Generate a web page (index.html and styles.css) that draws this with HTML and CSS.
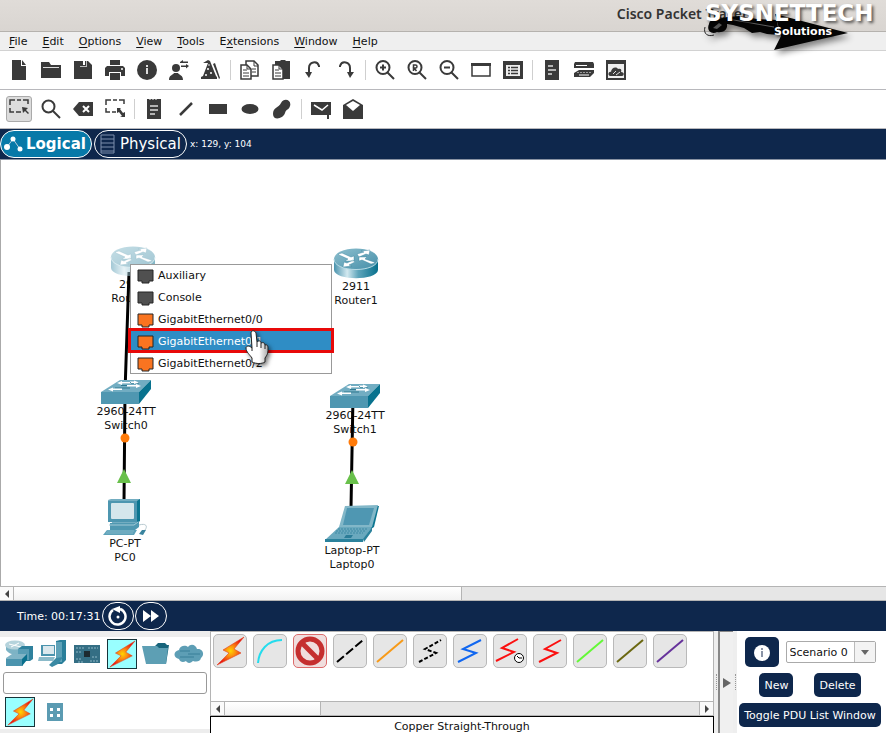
FILE: index.html
```html
<!DOCTYPE html>
<html lang="en">
<head>
<meta charset="utf-8">
<meta name="viewport" content="width=device-width, initial-scale=1">
<title>Cisco Packet Tracer</title>
<link rel="stylesheet" href="styles.css">
</head>
<body>
<svg class="sprite" width="0" height="0" aria-hidden="true">
  <defs>
    <linearGradient id="gBody" x1="0" x2="1"><stop offset="0" stop-color="#4a93ad"/><stop offset=".3" stop-color="#d3e9f0"/><stop offset=".55" stop-color="#5fa5bb"/><stop offset="1" stop-color="#07708d"/></linearGradient>
    <linearGradient id="gTop" x1="0" x2="1" y2="1"><stop offset="0" stop-color="#8dbfce"/><stop offset="1" stop-color="#468fa9"/></linearGradient>
    <radialGradient id="gBolt"><stop offset="0" stop-color="#ffd600"/><stop offset=".4" stop-color="#fb8a10"/><stop offset="1" stop-color="#e81111"/></radialGradient>
    <linearGradient id="gHand" x1="0" x2="1"><stop offset="0" stop-color="#fff"/><stop offset=".6" stop-color="#fff"/><stop offset="1" stop-color="#aaa"/></linearGradient>
  </defs>
  <symbol id="router" viewBox="0 0 46 31">
    <path d="M1 11v11c1 11 43 11 44 0V11z" fill="url(#gBody)"/>
    <ellipse cx="23" cy="11" rx="22" ry="10.5" fill="url(#gTop)"/>
    <path d="M1 11c0 14 44 14 44 0" fill="none" stroke="#b9dbe5"/>
    <path d="M5 6l4-1 9 4 3-1v5h-9l3-2-9-4zM42 15l-4 1-9-4-3 1V9h8l-2 2 9 3zM26 9l-2-3 7-2-3-1 9-1-1 5-3-1zM20 12l2 2-6 3 3 1-9 1 1-5 3 1z" fill="#fff" stroke="#317f9b" stroke-width=".4"/>
  </symbol>
  <symbol id="switch" viewBox="0 0 50 24">
    <path d="M0 12L19 0h31L38 12z" fill="#72adc2"/>
    <path d="M0 12h38v12H0z" fill="#4f97b1"/>
    <path d="M38 12L50 0v9L38 24z" fill="#08728e"/>
    <path d="M22 3h16M14 8h15M20 5.500h14" stroke="#31798f" fill="none"/>
    <path d="M16 3l5-2v1h9v1.500h-9V5zM40 6l-5-2v1h-9v1.500h9V8zM7 9.500l5-2v1h9V10h-9v1.500zM38 2.500l-5-2v1h-4V3h4v1z" fill="#fff"/>
  </symbol>
  <symbol id="bolt" viewBox="0 0 30 30"><path d="M29 1L8 14l6 3L2 29l24-12-7-4z" fill="url(#gBolt)" stroke="#e2401c" stroke-width=".6"/></symbol>
</svg>

<header class="titlebar">
  <h1>Cisco Packet Tracer</h1>
  <div class="brand">
    <svg width="150" height="50" viewBox="0 0 150 50" aria-hidden="true">
      <path d="M1 25c-2 7 3 10 9 8" fill="none" stroke="#222"/>
      <path d="M5 22c-3 7 3 11 8 8 6 1 11-2 10-8l6 1 11 3 8 5 8-1 7 2 12 1-2-15-20-1-18-3-12 1-8 2c-6-1-9 1-10 5z" fill="#050505"/>
      <path d="M71 12l73 19-74 17 7-14z" fill="#050505"/>
      <path d="M24 17l46 8" stroke="#777" stroke-width=".8"/>
      <path d="M9 26l6-5 3 2-5 4z" fill="#555"/>
    </svg>
    <strong>SYSNETTECH</strong>
    <em>Solutions</em>
  </div>
</header>

<nav class="menubar" aria-label="Main menu">
  <button><u>F</u>ile</button><button><u>E</u>dit</button><button><u>O</u>ptions</button><button><u>V</u>iew</button><button><u>T</u>ools</button><button>E<u>x</u>tensions</button><button><u>W</u>indow</button><button><u>H</u>elp</button>
</nav>

<div class="toolbar" role="toolbar" aria-label="Main tools">
  <button aria-label="New file"><svg viewBox="0 0 20 20"><path d="M3 0h9v6h5v14H3zM13 0l4 5h-4z"/></svg></button>
  <button aria-label="Open"><svg viewBox="0 0 20 20"><path d="M0 2h8l2 3h10v13H0z"/><path d="M2 7.500h16" stroke="#ddd"/></svg></button>
  <button aria-label="Save"><svg viewBox="0 0 20 20"><path d="M1 1h14l4 4v14H1z"/><path d="M6 1h1v6h7V1h-1v5H7V1z" fill="#bbb"/><path d="M10 1h2v4h-2z" fill="#fff"/></svg></button>
  <button aria-label="Print"><svg viewBox="0 0 20 20"><path d="M5 0h10v5H5zM2 6h16l2 2v8h-4v-4H4v4H0V8zM5 13h10v7H5z"/><circle cx="17" cy="9" r="1" fill="#fff"/></svg></button>
  <button aria-label="Information"><svg viewBox="0 0 20 20"><circle cx="10" cy="10" r="10"/><path d="M9 5h2v2H9zM9 8h2v6H9z" fill="#ddd"/></svg></button>
  <button aria-label="User profile"><svg viewBox="0 0 20 20"><circle cx="7" cy="8" r="4"/><path d="M0 20c0-5 4-5 5-7h4c1 2 5 2 5 7zM11 3V2l3-2v1.500h5V3zM20 6l-3-2v1.500h-5V7h5v1.500zM12 6h3"/></svg></button>
  <button aria-label="Activity wizard"><svg viewBox="0 0 20 20"><path d="M2 3l5-3 2 1 6 15 1 1v2H0v-2l2-1L7 3zM12 4l2-1 5 15-1 1z"/><g fill="#fff"><circle cx="7" cy="9" r="1"/><circle cx="10" cy="13" r="1"/><circle cx="5" cy="15" r="1"/><circle cx="8" cy="5" r=".8"/></g></svg></button>
  <span class="sep"></span>
  <button aria-label="Copy"><svg viewBox="0 0 20 20"><path d="M6 1h8l4 4v11H6z" fill="#fff" stroke="#3a3a3a" stroke-width="1.500"/><path d="M14 1v5h4M12 9h4M12 12h4" fill="none" stroke="#3a3a3a"/><path d="M1 5h6l4 4v10H1z" fill="#fff" stroke="#3a3a3a" stroke-width="1.500"/><path d="M7 5v4h4M3 10h4M3 13h6M3 16h6" fill="none" stroke="#3a3a3a"/></svg></button>
  <button aria-label="Paste"><svg viewBox="0 0 20 20"><path d="M3 1h5l1-1h4l1 1h4v18H3z"/><path d="M1 5h6l4 4v10H1z" fill="#fff" stroke="#3a3a3a" stroke-width="1.500"/><path d="M7 5v4h4M3 10h4M3 13h6M3 16h6" fill="none" stroke="#3a3a3a"/></svg></button>
  <button aria-label="Undo"><svg viewBox="0 0 20 20"><path d="M5 14V8c0-6 8-8 10-2v1" fill="none" stroke="#3a3a3a" stroke-width="2"/><path d="M1 12h7l-3 6z"/></svg></button>
  <button aria-label="Redo"><svg viewBox="0 0 20 20"><path d="M14 14V8c0-6-8-8-10-2v1" fill="none" stroke="#3a3a3a" stroke-width="2"/><path d="M11 12h7l-4 6z"/></svg></button>
  <span class="sep"></span>
  <button aria-label="Zoom in"><svg viewBox="0 0 20 20"><circle cx="8" cy="7.500" r="6.500" fill="none" stroke="#3a3a3a" stroke-width="2"/><path d="M12 12l7 7M5 7.500h6M8 4.500v6" stroke="#3a3a3a" stroke-width="2"/></svg></button>
  <button aria-label="Zoom reset"><svg viewBox="0 0 20 20"><circle cx="8" cy="7.500" r="6.500" fill="none" stroke="#3a3a3a" stroke-width="2"/><path d="M12 12l7 7" stroke="#3a3a3a" stroke-width="2"/><path d="M6.500 11V5h2a1.300 1.300 0 0 1 0 3H7l2.500 3" fill="none" stroke="#3a3a3a" stroke-width="1.500"/></svg></button>
  <button aria-label="Zoom out"><svg viewBox="0 0 20 20"><circle cx="8" cy="7.500" r="6.500" fill="none" stroke="#3a3a3a" stroke-width="2"/><path d="M12 12l7 7M5 7.500h6" stroke="#3a3a3a" stroke-width="2"/></svg></button>
  <button aria-label="Drawing palette"><svg viewBox="0 0 20 20"><rect x="1" y="4" width="18" height="12" fill="#fff" stroke="#3a3a3a" stroke-width="1.500"/><path d="M0 3h20v3H0z"/></svg></button>
  <button aria-label="Device dialog"><svg viewBox="0 0 20 20"><path d="M0 1h20v18H0z"/><path d="M3 5h14v11H3z" fill="#eee"/><path d="M5 7.500h2M5 10.500h2M5 13.500h2M8 7.500h7M8 10.500h7M8 13.500h7" stroke="#3a3a3a" stroke-width="1.500"/></svg></button>
  <span class="sep"></span>
  <button aria-label="Notes"><svg viewBox="0 0 20 20"><path d="M3 0h14v20H3z"/><path d="M6 6h5M6 10h8M6 14h4" stroke="#ddd" stroke-width="1.500"/></svg></button>
  <button aria-label="Custom devices"><svg viewBox="0 0 20 20"><path d="M1 2h18l1 2v4H0V4zM5 10h15v3l-4 4H0v-4z"/><path d="M2 5.500h11M1 9h18M5 15h10" stroke="#fff"/><path d="M3 12.500h14" stroke="#999" stroke-dasharray="2 1"/></svg></button>
  <button aria-label="Cloud"><svg viewBox="0 0 20 20"><path d="M0 0h20v20H0z"/><path d="M2 4h16v14H2z" fill="#eee"/><path d="M4 16c-3-1-1-5 1-4 0-4 5-6 7-3 3-1 4 1 3 3 4 0 3 4 1 4z"/><path d="M7 14l3-3M10 15l4-3" stroke="#ddd"/></svg></button>
</div>

<div class="toolbar" role="toolbar" aria-label="Common tools">
  <button class="pressed" aria-label="Select"><svg viewBox="0 0 20 20"><path d="M1 6V1h5M8 1h4M14 1h5v4M1 9v4h4M7 13h5" fill="none" stroke="#3a3a3a" stroke-width="1.500"/><path d="M13 8l6 1-2 2 3 3-1 1-3-3-2 2z"/></svg></button>
  <button aria-label="Inspect"><svg viewBox="0 0 20 20"><circle cx="7.500" cy="7.500" r="6" fill="none" stroke="#3a3a3a" stroke-width="2"/><path d="M12 12l7 7" stroke="#3a3a3a" stroke-width="2"/></svg></button>
  <button aria-label="Delete"><svg viewBox="0 0 20 20"><path d="M0 10l6-7h14v14H6z"/><path d="M10 7l6 6M16 7l-6 6" stroke="#fff" stroke-width="2"/></svg></button>
  <button aria-label="Resize"><svg viewBox="0 0 20 20"><path d="M1 6V1h5M8 1h4M14 1h5v4M1 9v4h4M7 13h4" fill="none" stroke="#3a3a3a" stroke-width="1.500"/><path d="M12 9h4l-1 1 3 4 2-1v5h-5l2-1-3-4-2 1z"/></svg></button>
  <span class="sep"></span>
  <button aria-label="Place note"><svg viewBox="0 0 20 20"><path d="M3 0h2l1 1 1-1h1l1 1 1-1h1l1 1 1-1h4v20H3z"/><path d="M6 7h8M6 11h8M6 15h5" stroke="#ddd" stroke-width="1.500"/></svg></button>
  <button aria-label="Draw line"><svg viewBox="0 0 20 20"><path d="M4 16L16 4" stroke="#3a3a3a" stroke-width="2.500"/></svg></button>
  <button aria-label="Draw rectangle"><svg viewBox="0 0 20 20"><path d="M1 5h18v10H1z"/></svg></button>
  <button aria-label="Draw ellipse"><svg viewBox="0 0 20 20"><ellipse cx="10" cy="10" rx="8.500" ry="5"/></svg></button>
  <button aria-label="Draw freeform"><svg viewBox="0 0 20 20"><path d="M9 4c3-6 11-3 9 3-1 4-4 3-5 7-2 6-12 8-12 1 0-7 6-6 8-11z"/></svg></button>
  <span class="sep"></span>
  <button aria-label="Simple PDU"><svg viewBox="0 0 20 20"><path d="M0 3h20v13h-2v4h-2v-4H0z"/><path d="M3 6l8 5 6-5" fill="none" stroke="#fff" stroke-width="1.500"/></svg></button>
  <button aria-label="Complex PDU"><svg viewBox="0 0 20 20"><path d="M0 6l10-6 10 6v14H0z"/><path d="M3 6l7-4 7 4-7 6z" fill="#fff"/></svg></button>
</div>

<div class="navybar views">
  <button class="pill active"><svg width="20" height="16" viewBox="0 0 20 16" aria-hidden="true"><path d="M3 11l6-8 7 10" fill="none" stroke="#bcd" /><g fill="#fff"><circle cx="3" cy="11" r="3"/><circle cx="9" cy="3" r="2.500"/><circle cx="16" cy="13" r="2.500"/></g></svg>Logical</button>
  <button class="pill"><svg width="20" height="20" viewBox="0 0 20 20" aria-hidden="true"><path d="M3 1h13v18H3zM3 5h13M3 9h13M3 13h13M3 17h13" fill="none" stroke="#7c8fac"/></svg>Physical</button>
  <span class="coords">x: 129, y: 104</span>
</div>

<main class="workspace">
  <svg class="cables" aria-hidden="true">
    <path d="M129 112L125 232L124 342M353 236L351 348" fill="none" stroke="#000" stroke-width="3"/>
    <g fill="#ff7b0a"><circle cx="125" cy="278" r="4.500"/><circle cx="353" cy="282" r="4.500"/></g>
    <path d="M124 309l7 14h-14zM352 310l7 14h-14z" fill="#69c04b"/>
  </svg>
  <figure class="node router0"><svg class="dim" width="46" height="31"><use href="#router"/></svg><figcaption>2911<br>Router0</figcaption></figure>
  <figure class="node router1"><svg width="46" height="31"><use href="#router"/></svg><figcaption>2911<br>Router1</figcaption></figure>
  <figure class="node switch0"><svg width="50" height="24"><use href="#switch"/></svg><figcaption>2960-24TT<br>Switch0</figcaption></figure>
  <figure class="node switch1"><svg width="50" height="24"><use href="#switch"/></svg><figcaption>2960-24TT<br>Switch1</figcaption></figure>
  <figure class="node pc0"><svg width="44" height="37" viewBox="0 0 44 37">
    <path d="M5 1l3-1h29l-3 24H9z" fill="#73adc1"/><path d="M34 2l3-2v22l-4 3z" fill="#0c7590"/><path d="M5 2h29v21H5z" fill="#4d96b0"/><rect x="8" y="4" width="23" height="16" rx="1" fill="#d5e6ec"/>
    <path d="M7 24h25l4-2v6l-4 3H7z" fill="#4f98b1"/><path d="M6 26h25l4-3" stroke="#a3cad7" fill="none"/><path d="M4 31h30l-3 5H0z" fill="#5ca1b8"/><path d="M4 32h27M3 34h27" stroke="#81b6c8"/><path d="M36 35l3-4h4l-3 5z" fill="#3a849f"/><path d="M36 26c7-2 9 1 6 5" fill="none" stroke="#b5c8cf"/></svg><figcaption>PC-PT<br>PC0</figcaption></figure>
  <figure class="node laptop0"><svg width="54" height="38" viewBox="0 0 54 38">
    <path d="M20 1h32l2 0-5 21-3 2z" fill="#0c7590"/><path d="M20 1l33-1-6 22H14z" fill="#82b7c8"/><path d="M22 3h27l-5 17H18z" fill="#4f97b2"/><path d="M14 22h33l-9 13H0z" fill="#6aa9be"/><path d="M0 34h38v3H0zM38 34l9-12v4l-8 11z" fill="#2b829c"/><path d="M13 24h29M11 26h29M10 28h28" stroke="#3e8aa4" stroke-dasharray="2 1"/><path d="M21 30h7l-2 3h-7z" fill="#2c7d98"/></svg><figcaption>Laptop-PT<br>Laptop0</figcaption></figure>

  <div class="portmenu" role="menu">
    <button role="menuitem" class="dark"><svg width="17" height="15" viewBox="0 0 17 15"><path d="M1 1h15v11h-4v2H5v-2H1z"/></svg>Auxiliary</button>
    <button role="menuitem" class="dark"><svg width="17" height="15" viewBox="0 0 17 15"><path d="M1 1h15v11h-4v2H5v-2H1z"/></svg>Console</button>
    <button role="menuitem"><svg width="17" height="15" viewBox="0 0 17 15"><path d="M1 1h15v11h-4v2H5v-2H1z"/></svg>GigabitEthernet0/0</button>
    <button role="menuitem" class="selected"><svg width="17" height="15" viewBox="0 0 17 15"><path d="M1 1h15v11h-4v2H5v-2H1z"/></svg>GigabitEthernet0/1</button>
    <button role="menuitem"><svg width="17" height="15" viewBox="0 0 17 15"><path d="M1 1h15v11h-4v2H5v-2H1z"/></svg>GigabitEthernet0/2</button>
  </div>
  <svg class="pointer" width="24" height="34" viewBox="0 0 24 34" aria-hidden="true"><path d="M6 3c0-3 4-3 5 0l1 9c2-2 4-1 4 1 2-1 4 0 4 2 3-1 3 2 3 4 0 5-1 6-3 9v4c-3 2-9 2-13 0v-4c-2-3-6-6-6-10 0-2 3-3 6 0z" fill="url(#gHand)" stroke="#222"/><path d="M12 12v5M16 13v5M20 15v4M7 18v3" stroke="#222" fill="none"/></svg>
</main>

<div class="scrollbar" aria-hidden="true"><span class="step left"></span><span class="thumb"></span></div>

<div class="navybar clock">
  <span>Time: 00:17:31</span>
  <button class="round" aria-label="Power cycle devices"><svg width="20" height="20" viewBox="0 0 20 20"><path d="M12 3a8 8 0 1 1-7 1" fill="none" stroke="#fff" stroke-width="2.500"/><path d="M4 3l8-3v7z" fill="#fff"/><circle cx="10" cy="11" r="1.500" fill="#fff"/></svg></button>
  <button class="round" aria-label="Fast forward"><svg width="20" height="20" viewBox="0 0 20 20"><path d="M2 4l8 6-8 6zM10 4l8 6-8 6z" fill="#fff"/></svg></button>
</div>

<footer class="bottom">
  <section class="devices" aria-label="Device types">
    <div class="devrow">
      <button aria-label="Network devices"><svg viewBox="0 0 30 30"><path d="M2 6v5c4 6 15 6 18 0V6z" fill="#7db3c5"/><ellipse cx="11" cy="6" rx="10" ry="4.500" fill="#b5d3dc"/><path d="M5 5l12 3M15 4L7 8" stroke="#fff"/><path d="M14 10l4-3h11v13l-3 2H14z" fill="#2e819d"/><path d="M14 10h11v11H14z" fill="#579db5"/><path d="M2 19l6-4h15l-4 5v7H2z" fill="#80b4c6"/><path d="M2 20h16v7H2z" fill="#4b94ae"/><path d="M18 20l5-5v6l-5 6z" fill="#08708d"/></svg></button>
      <button aria-label="End devices"><svg viewBox="0 0 30 30"><path d="M18 2l4-1h6v20l-4 4h-6z" fill="#2a7f9a"/><path d="M18 3h6v20h-6z" fill="#5ea2b8"/><path d="M3 6h14v11H3z" fill="#4b94ae"/><path d="M5 7h11v8H5z" fill="#dbe8ed"/><path d="M1 18h16l-2 4H0z" fill="#8bbac9"/><path d="M11 26l7-7 7-1-5 7-6 3z" fill="#3a89a3"/></svg></button>
      <button aria-label="Components"><svg viewBox="0 0 30 30"><path d="M2 6h26v18H2z" fill="#346e84"/><path d="M4 9h8M16 9h10M4 20h5M18 22h8M4 13h5M20 18h6M6 23h6" stroke="#8db7c6" stroke-dasharray="2 1"/><path d="M12 12h6v6h-6z" fill="#1d2a30"/></svg></button>
      <button class="on" aria-label="Connections"><svg viewBox="0 0 30 30"><use href="#bolt"/></svg></button>
      <button aria-label="Miscellaneous"><svg viewBox="0 0 30 30"><path d="M15 7l3-3h7l2 2h2l-3 19-9-1z" fill="#17647b"/><path d="M2 7h15l2 2h9l-2 16H6z" fill="#5d9fb4"/></svg></button>
      <button aria-label="Multiuser connection"><svg viewBox="0 0 30 30"><path d="M5 20c-6-1-6-8 0-9 1-5 7-5 9-3 3-4 8-2 9 2 6-1 8 6 4 9-1 4-5 4-8 3-3 3-6 2-7 0-3 2-6 1-7-2z" fill="#5d9eb5"/><path d="M6 12h10M14 15h12M6 18h14" stroke="#397f98"/></svg></button>
    </div>
    <input type="text" aria-label="Search devices">
    <div class="devrow sub">
      <button class="on" aria-label="Connections"><svg viewBox="0 0 30 30"><use href="#bolt"/></svg></button>
      <button aria-label="Structured cabling"><svg viewBox="0 0 30 30"><path d="M7 6h16v18H7z" fill="#5b9bb2"/><path d="M10 11h3v3h-3zM17 11h3v3h-3zM10 17h3v3h-3zM17 17h3v3h-3z" fill="#fff"/></svg></button>
    </div>
  </section>

  <section class="cablepane" aria-label="Cables">
    <div class="cablelist">
      <button aria-label="Automatic"><svg viewBox="0 0 30 30"><use href="#bolt"/></svg></button>
      <button aria-label="Console cable"><svg viewBox="0 0 30 30"><path d="M3 27C4 15 12 4 27 4" stroke="#24dced"/></svg></button>
      <button class="cancel" aria-label="Cancel"><svg viewBox="0 0 30 30"><circle cx="15" cy="15" r="12" stroke="#c52f2f" stroke-width="5"/><path d="M7 7l16 16" stroke="#c52f2f" stroke-width="5"/></svg></button>
      <button aria-label="Copper Straight-Through"><svg viewBox="0 0 30 30"><path d="M2 26L28 4" stroke="#000" stroke-dasharray="9 3"/></svg></button>
      <button aria-label="Copper Cross-Over"><svg viewBox="0 0 30 30"><path d="M2 26L28 4" stroke="#f79a18"/></svg></button>
      <button aria-label="Fiber"><svg viewBox="0 0 30 30"><path d="M4 26l17-9-11-4 16-9" stroke="#000" stroke-dasharray="4 2"/></svg></button>
      <button aria-label="Phone"><svg viewBox="0 0 30 30"><path d="M3 26l18-9-13-4 18-9" stroke="#1167f0"/></svg></button>
      <button aria-label="Serial DCE"><svg viewBox="0 0 30 30"><path d="M1 25l18-9-12-4 16-9" stroke="#fb1010"/><circle cx="24" cy="22" r="4.500" fill="#fff" stroke="#000" stroke-width="1"/><path d="M22 20l2 2h3" stroke="#000" stroke-width="1"/></svg></button>
      <button aria-label="Serial DTE"><svg viewBox="0 0 30 30"><path d="M4 26l18-9-12-4 16-9" stroke="#fb1010"/></svg></button>
      <button aria-label="Octal"><svg viewBox="0 0 30 30"><path d="M2 26L28 4" stroke="#64f837"/></svg></button>
      <button aria-label="Coaxial"><svg viewBox="0 0 30 30"><path d="M2 26L28 4" stroke="#6a6710"/></svg></button>
      <button aria-label="USB"><svg viewBox="0 0 30 30"><path d="M2 26L28 4" stroke="#66329b"/></svg></button>
    </div>
    <div class="scrollbar" aria-hidden="true"><span class="step left"></span><span class="thumb short"></span><span class="step right"></span></div>
    <p class="cablename">Copper Straight-Through</p>
  </section>

  <div class="splitter" aria-hidden="true"><span class="grip"></span><span class="expander"></span><span class="grip"></span></div>

  <section class="scenario" aria-label="Scenario">
    <div class="row">
      <button class="navy info" aria-label="Scenario information"><svg width="18" height="18" viewBox="0 0 18 18"><circle cx="9" cy="9" r="8" fill="#fff"/><path d="M8 4h2v2H8zM8 7h2v6H8z" fill="#8a94a6"/></svg></button>
      <span class="picker"><select aria-label="Scenario"><option>Scenario 0</option></select></span>
    </div>
    <div class="row wide"><button class="navy">New</button><button class="navy">Delete</button></div>
    <div class="row"><button class="navy">Toggle PDU List Window</button></div>
  </section>
</footer>
</body>
</html>
```
FILE: styles.css
```css
* { box-sizing: border-box; }
body {
  margin: 0;
  min-height: 100vh;
  display: flex;
  flex-direction: column;
  background: #fff;
  color: #111;
  font: 11px/14px "DejaVu Sans", sans-serif;
}
button {
  margin: 0;
  padding: 0;
  border: 0;
  background: none;
  color: inherit;
  font: inherit;
}
.sprite { position: absolute; }

/* Title bar and brand mark */
.titlebar {
  position: relative;
  height: 32px;
  flex: none;
  display: flex;
  align-items: center;
  justify-content: flex-end;
  background: linear-gradient(#e0dcd8, #d9d5d1);
  border-bottom: 1px solid #b5b2ae;
}
h1 {
  margin: 0 138px 4px 0;
  font: 600 14px/20px "Noto Sans", "Open Sans", sans-serif;
  color: #333;
}
.brand {
  position: absolute;
  top: 0;
  right: 4px;
  width: 178px;
  height: 50px;
  color: #fff;
}
.brand svg {
  position: absolute;
  top: 2px;
  left: 0;
  filter: drop-shadow(3px 4px 3px #0007);
}
.brand strong, .brand em {
  position: absolute;
  font-style: normal;
  font-weight: bold;
  text-shadow: 2px 2px 3px #0009;
}
.brand strong { top: 0; left: 1px; font-size: 23px; line-height: 27px; }
.brand em { top: 25px; left: 70px; }

/* Menus and toolbars */
.menubar {
  height: 19px;
  flex: none;
  display: flex;
  align-items: center;
  gap: 15px;
  padding: 2px 0 0 9px;
  background: #efefef;
  border-bottom: 1px solid #d2d2d2;
}
.menubar u { text-underline-offset: 2px; }
.toolbar {
  height: 39px;
  flex: none;
  display: flex;
  align-items: center;
  padding-left: 3px;
  border-bottom: 1px solid #b8b8bc;
}
.toolbar button {
  width: 32px;
  height: 26px;
  display: grid;
  place-items: center;
}
.toolbar svg { width: 20px; height: 20px; fill: #3a3a3a; }
.toolbar .pressed {
  width: 26px;
  margin: 0 3px;
  border: 1px solid #aaa;
  border-radius: 3px;
  background: #dcdcdc;
}
.sep { width: 1px; height: 20px; margin: 0 3px; background: #cfcfcf; }

/* Navy strips */
.navybar {
  flex: none;
  display: flex;
  align-items: center;
  background: #0e274c;
  color: #fff;
}
.views { height: 31px; gap: 2px; border-bottom: 1px solid #8993a3; }
.pill {
  height: 28px;
  display: flex;
  align-items: center;
  gap: 2px;
  padding: 0 5px 0 3px;
  border: 1px solid #fff;
  border-radius: 14px;
  font-size: 15px;
}
.pill.active { background: #0779a8; font-weight: bold; }
.coords { margin-left: 1px; font-size: 9px; }
.clock { height: 30px; gap: 1px; padding-left: 17px; }
.clock span { padding-top: 2px; }
.round {
  width: 32px;
  height: 28px;
  display: grid;
  place-items: center;
  border: 1px solid #fff;
  border-radius: 14px;
}

/* Topology canvas */
.workspace {
  position: relative;
  flex: 1 0 426px;
  overflow: hidden;
  border-left: 1px solid #aaa;
}
.cables {
  position: absolute;
  z-index: 1;
  top: 0;
  left: -1px;
  width: 100%;
  height: 100%;
}
.node {
  position: absolute;
  width: 72px;
  margin: 0;
  display: flex;
  flex-direction: column;
  align-items: center;
  gap: 1px;
  text-align: center;
}
.node svg { position: relative; z-index: 2; }
.dim { opacity: .5; }
.router0 { left: 96px; top: 86px; }
.router1 { left: 319px; top: 88px; }
.switch0 { left: 89px; top: 220px; }
.switch1 { left: 318px; top: 224px; }
.pc0 { left: 88px; top: 339px; }
.laptop0 { left: 315px; top: 345px; }

.portmenu {
  position: absolute;
  z-index: 3;
  top: 104px;
  left: 129px;
  width: 202px;
  border: 1px solid #999;
  background: #fff;
}
.portmenu button {
  position: relative;
  width: 100%;
  height: 22px;
  display: flex;
  align-items: center;
  gap: 4px;
  padding: 0 6px;
}
.portmenu button:last-child { height: 20px; padding-top: 2px; }
.portmenu svg { fill: #f97420; stroke: #242424; }
.portmenu .dark svg { fill: #505050; }
.portmenu .selected { z-index: 1; background: #2f8dc5; color: #fff; }
.portmenu .selected::after {
  content: "";
  position: absolute;
  inset: -3px -3px 0;
  border: 3px solid #e80909;
}
.pointer {
  position: absolute;
  z-index: 4;
  top: 170px;
  left: 244px;
  filter: drop-shadow(2px 2px 2px #0008);
}

/* Scroll bars */
.scrollbar {
  height: 15px;
  flex: none;
  display: flex;
  background: #e6e6e6;
  border: solid #b4b4b4;
  border-width: 1px 0;
}
.step {
  width: 14px;
  display: grid;
  place-items: center;
  background: #fafafa;
}
.step::after {
  content: "";
  border: solid transparent;
  border-width: 4px 0;
}
.left { border-right: 1px solid #b4b4b4; }
.left::after { border-right: 4px solid #444; }
.right { margin-left: auto; border-left: 1px solid #b4b4b4; }
.right::after { border-left: 4px solid #444; }
.thumb {
  width: 448px;
  background: linear-gradient(#fff, #f2f2f2);
  border-right: 1px solid #b4b4b4;
}
.thumb.short { width: 96px; }

/* Bottom panels */
.bottom {
  flex: none;
  display: grid;
  grid-template-columns: 210px minmax(0, 1fr) 23px 149px;
  height: 102px;
}
.devices {
  padding: 2px 3px 1px;
  border: solid #ededed;
  border-width: 6px 0 4px;
}
.devrow { display: flex; gap: 4px; padding-left: 1px; }
.devrow button { width: 30px; height: 30px; }
.devrow button.on { margin: 0 -1px 0 1px; }
.devrow.sub { gap: 6px; padding-left: 1px; }
.devrow svg { display: block; width: 100%; height: 100%; }
.devrow .on { border: 1px solid #17343a; background: #9ff; }
.devices input {
  display: block;
  width: 100%;
  height: 22px;
  margin: 3px 0;
  border: 1px solid #999;
  border-radius: 3px;
  font: inherit;
}
.cablepane {
  display: flex;
  flex-direction: column;
  border: solid #b4b4b4;
  border-width: 1px 1px 0;
}
.cablelist {
  flex: 1;
  display: flex;
  gap: 6px;
  padding: 2px;
  overflow: hidden;
}
.cablelist button {
  width: 34px;
  height: 34px;
  flex: none;
  padding: 1px;
  border: 1px solid #b9b9b9;
  border-radius: 5px;
  background: #e6e6e6;
}
.cablelist .cancel { border-color: #dc6b6b; background: #f0dede; }
.cablelist svg { display: block; fill: none; stroke-width: 2; }
.cablename {
  height: 17px;
  margin: 0 -1px;
  padding-top: 3px;
  border: 1px solid #000;
  border-bottom: 0;
  text-align: center;
}
.splitter {
  display: grid;
  grid-template-columns: 4px 1fr 4px;
  background: #eee;
}
.grip {
  align-self: center;
  justify-self: center;
  height: 16px;
  border-left: 1px dotted #999;
}
.expander {
  display: grid;
  place-items: center;
  border-left: 2px solid #888;
  border-top: 1px solid #888;
  background: #f0f0f0;
}
.expander::after {
  content: "";
  border: solid transparent;
  border-width: 5px 0 5px 8px;
  border-left-color: #666;
}
.scenario {
  display: flex;
  flex-direction: column;
  align-items: center;
  gap: 6px;
  padding-top: 6px;
}
.row { display: flex; align-items: center; gap: 7px; padding-right: 3px; }
.row.wide { gap: 21px; }
.navy {
  height: 24px;
  padding: 1px 5px 0;
  border-radius: 5px;
  background: #0e274c;
  color: #fff;
}
.navy.info {
  width: 34px;
  height: 30px;
  display: grid;
  place-items: center;
}
.picker { position: relative; }
.picker select {
  width: 90px;
  height: 22px;
  padding: 1px 3px 0;
  appearance: none;
  border: 1px solid #aaa;
  border-radius: 2px;
  background: #fff;
  color: #111;
  font: inherit;
}
.picker::before {
  content: "";
  position: absolute;
  top: 1px;
  right: 1px;
  width: 20px;
  height: 20px;
  border-left: 1px solid #bbb;
  background: #f3f3f3;
  pointer-events: none;
}
.picker::after {
  content: "";
  position: absolute;
  top: 9px;
  right: 7px;
  border: solid transparent;
  border-width: 5px 4px 0;
  border-top-color: #666;
  pointer-events: none;
}
```
